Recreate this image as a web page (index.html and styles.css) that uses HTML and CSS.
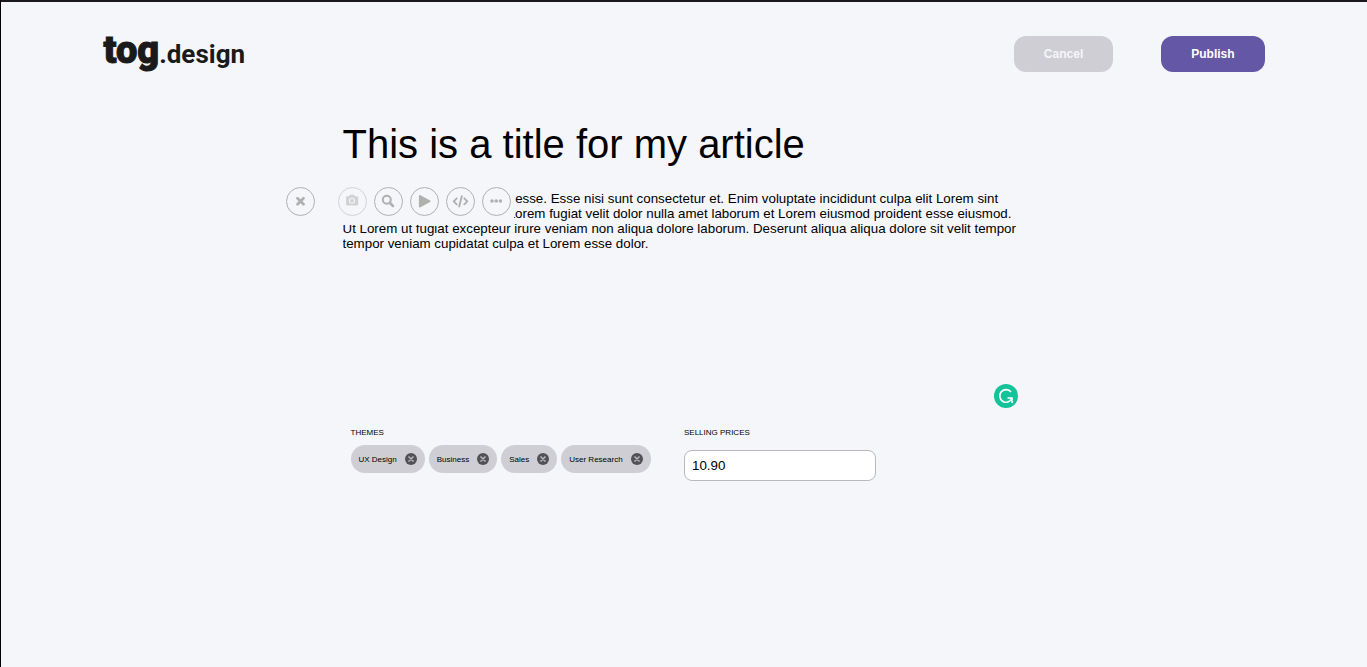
FILE: index.html
```html
<!DOCTYPE html>
<html lang="en">
<head>
<meta charset="utf-8">
<title>tog.design</title>
<link rel="stylesheet" href="styles.css">
</head>
<body>
<div class="page">
  <header class="header">
    <a class="logo" href="#"><span class="logo-main">tog</span><span class="logo-sub">.design</span></a>
    <div class="actions">
      <button class="btn btn-cancel" type="button">Cancel</button>
      <button class="btn btn-publish" type="button">Publish</button>
    </div>
  </header>
  <main class="editor">
    <h1 class="title">This is a title for my article</h1>
    <div class="body-wrap">
      <textarea class="body-text" aria-label="Article body" spellcheck="false">Ut dolor ea magna nostrud a esse. Esse nisi sunt consectetur et. Enim voluptate incididunt culpa elit Lorem sint
velit fugiat commodo ipsum Lorem fugiat velit dolor nulla amet laborum et Lorem eiusmod proident esse eiusmod.
Ut Lorem ut fugiat excepteur irure veniam non aliqua dolore laborum. Deserunt aliqua aliqua dolore sit velit tempor tempor veniam cupidatat culpa et Lorem esse dolor.</textarea>
      <div class="toolbar">
        <button class="tool" type="button" aria-label="Close"><svg width="29" height="29" viewBox="0 0 29 29"><path d="M11.500 11.300l6 6m0-6l-6 6" fill="none" stroke="#b0b0ae" stroke-width="2.800" stroke-linecap="round"/></svg></button>
        <div class="tools">
          <button class="tool tool-faded" type="button" aria-label="Add image"><svg width="29" height="29" viewBox="0 0 29 29"><path fill="#b0b0ae" d="M9.200 9.300h1.900l.9-1.500h4l.9 1.500h2q1.200 0 1.200 1.200v6.800q0 1.200-1.200 1.200H9.200q-1.200 0-1.200-1.200v-6.800q0-1.200 1.200-1.200z"/><circle cx="14" cy="13.700" r="2.500" fill="none" stroke="#f5f6fa" stroke-width="1.100"/></svg></button>
          <button class="tool" type="button" aria-label="Search image"><svg width="29" height="29" viewBox="0 0 29 29"><g fill="none" stroke="#b0b0ae" stroke-width="2"><circle cx="12.800" cy="12.800" r="4"/><path d="M16 16l3 3" stroke-width="2.600" stroke-linecap="round"/></g></svg></button>
          <button class="tool" type="button" aria-label="Add video"><svg width="29" height="29" viewBox="0 0 29 29"><path d="M9.700 8.800v11l10-5.500z" fill="#b0b0ae" stroke="#b0b0ae" stroke-width="1.600" stroke-linejoin="round"/></svg></button>
          <button class="tool" type="button" aria-label="Add code"><svg width="29" height="29" viewBox="0 0 29 29"><path d="M10.700 11.300l-3 3 3 3M18.300 11.300l3 3-3 3M15.800 9.200l-2.600 10.300" fill="none" stroke="#b0b0ae" stroke-width="1.900" stroke-linecap="round" stroke-linejoin="round"/></svg></button>
          <button class="tool" type="button" aria-label="More"><svg width="29" height="29" viewBox="0 0 29 29"><g fill="#b0b0ae"><circle cx="10" cy="14" r="1.800"/><circle cx="14.200" cy="14" r="1.800"/><circle cx="18.400" cy="14" r="1.800"/></g></svg></button>
        </div>
      </div>
      <button class="checker" type="button" aria-label="Check grammar"><svg width="24" height="24" viewBox="0 0 24 24"><circle cx="12" cy="12" r="12" fill="#15c39a"/><path d="M17 8a6.300 6.300 0 1 0 .8 6.500M13.500 14h4.500v5" fill="none" stroke="#fff" stroke-width="1.700"/></svg></button>
    </div>
    <div class="meta">
      <section class="themes">
        <h2 class="label">THEMES</h2>
        <ul class="tags">
          <li class="tag">UX Design<button class="remove" type="button" aria-label="Remove UX Design"><svg width="12" height="12" viewBox="0 0 12 12"><circle cx="6" cy="6" r="6" fill="#525256"/><path d="M4 4l4 4m0-4l-4 4" stroke="#b4b3b9" stroke-width="1.700" stroke-linecap="round"/></svg></button></li>
          <li class="tag">Business<button class="remove" type="button" aria-label="Remove Business"><svg width="12" height="12" viewBox="0 0 12 12"><circle cx="6" cy="6" r="6" fill="#525256"/><path d="M4 4l4 4m0-4l-4 4" stroke="#b4b3b9" stroke-width="1.700" stroke-linecap="round"/></svg></button></li>
          <li class="tag">Sales<button class="remove" type="button" aria-label="Remove Sales"><svg width="12" height="12" viewBox="0 0 12 12"><circle cx="6" cy="6" r="6" fill="#525256"/><path d="M4 4l4 4m0-4l-4 4" stroke="#b4b3b9" stroke-width="1.700" stroke-linecap="round"/></svg></button></li>
          <li class="tag">User Research<button class="remove" type="button" aria-label="Remove User Research"><svg width="12" height="12" viewBox="0 0 12 12"><circle cx="6" cy="6" r="6" fill="#525256"/><path d="M4 4l4 4m0-4l-4 4" stroke="#b4b3b9" stroke-width="1.700" stroke-linecap="round"/></svg></button></li>
        </ul>
      </section>
      <div class="prices">
        <label class="label" for="price">SELLING PRICES</label>
        <input class="price" id="price" type="text" value="10.90">
      </div>
    </div>
  </main>
</div>
</body>
</html>
```
FILE: styles.css
```css
* { box-sizing: border-box; }
body {
  margin: 0;
  background: #f5f6fa;
  font-family: "Liberation Sans", Arial, sans-serif;
  color: #000;
}
button { padding: 0; border: 0; background: none; font-family: inherit; }
svg { display: block; }
.page {
  min-height: 100vh;
  border-top: 2px solid #1b181d;
  border-left: 1px solid #000;
}
.header {
  display: flex;
  justify-content: space-between;
  align-items: flex-start;
  padding: 34px 7.5% 0;
}
.logo {
  display: flex;
  align-items: baseline;
  height: 36px;
  line-height: 28px;
  font-family: Roboto, sans-serif;
  color: #1a1a1a;
  text-decoration: none;
}
.logo-main { font-size: 38px; font-weight: 900; -webkit-text-stroke: 1px #1a1a1a; }
.logo-sub { font-size: 26px; font-weight: 700; }
.actions { display: flex; gap: 48px; }
.btn {
  height: 36px;
  padding: 0 30px;
  border-radius: 12px;
  font-size: 12px;
  font-weight: 700;
}
.btn-cancel { background: #cfced4; color: #f5f6fa; }
.btn-publish { background: #6457a6; color: #fff; }
.editor { width: 50%; margin: 0 auto; padding-top: 49px; }
.title { margin: 0; font-size: 40px; font-weight: 400; line-height: 46px; }
.body-wrap { position: relative; margin-top: 24px; }
.body-text {
  display: block;
  width: 100%;
  height: 219px;
  padding: 0;
  border: 0;
  outline: 0;
  resize: none;
  overflow: hidden;
  background: transparent;
  color: #000;
  font-family: inherit;
  line-height: 15px;
}
.toolbar {
  position: absolute;
  top: -4px;
  left: -57px;
  display: flex;
  gap: 23px;
  padding-bottom: 9px;
  background: #f5f6fa;
}
.tools { display: flex; gap: 7px; padding-right: 3px; }
.tool {
  width: 29px;
  height: 29px;
  border: 1px solid #b0b0ae;
  border-radius: 50%;
}
.tool svg { margin: -1px; }
.tool-faded { opacity: 0.5; }
.checker { position: absolute; right: 8px; bottom: 2px; }
.meta { display: grid; grid-template-columns: 1fr 1fr; margin-top: 18px; }
.themes { padding-left: 8px; }
.label {
  display: block;
  margin: 0;
  font-size: 8px;
  font-weight: 400;
  line-height: 10px;
}
.tags { display: flex; gap: 4px; margin: 7px 0 0; padding: 0; list-style: none; }
.tag {
  display: flex;
  align-items: center;
  gap: 8px;
  height: 28px;
  padding: 0 8px;
  border-radius: 14px;
  background: #cfced4;
  font-size: 8px;
  white-space: nowrap;
}
.price {
  display: block;
  width: 192px;
  height: 31px;
  margin-top: 12px;
  padding: 0 7px;
  border: 1px solid #b9b9bb;
  border-radius: 8px;
  background: #fff;
  font-family: inherit;
}
```
